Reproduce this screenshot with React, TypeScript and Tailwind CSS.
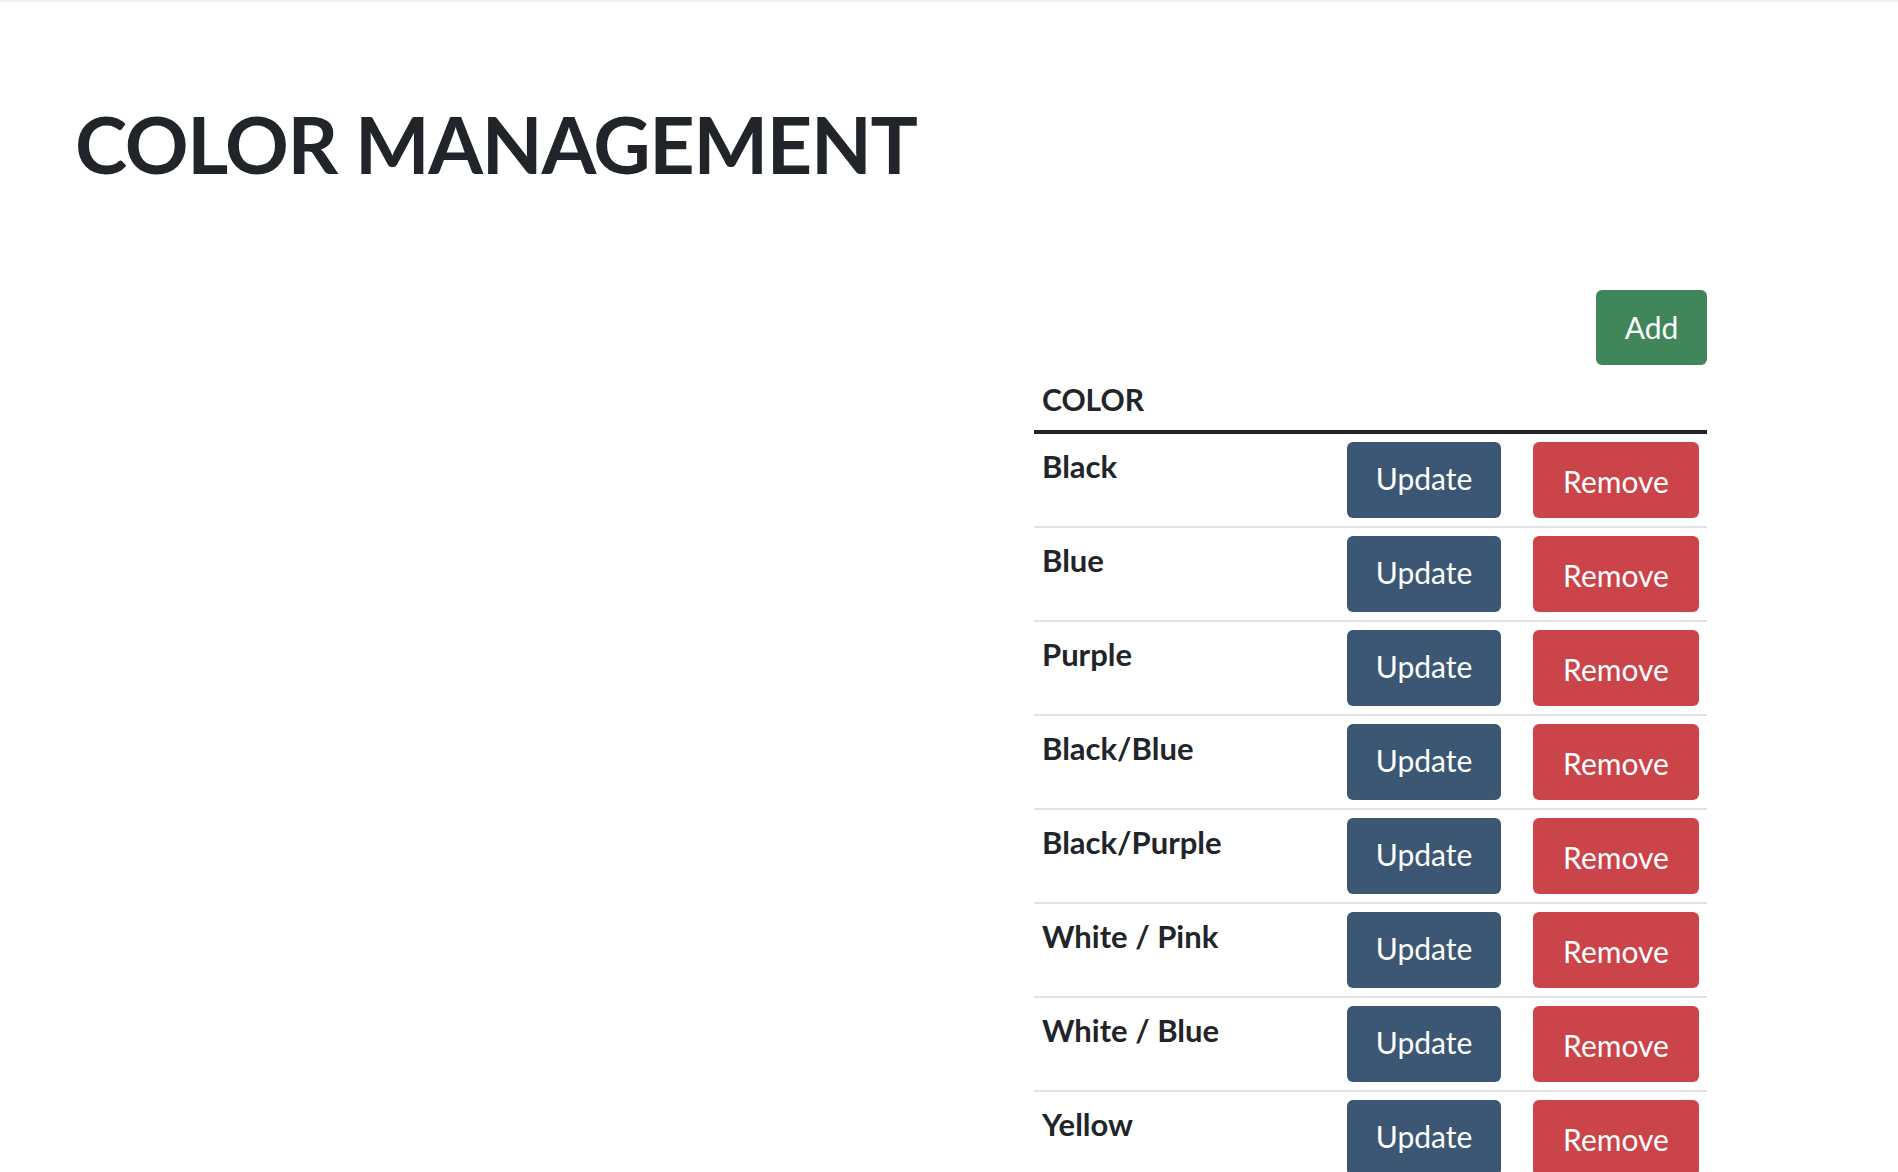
import React from "react";

const colors = [
  "Black",
  "Blue",
  "Purple",
  "Black/Blue",
  "Black/Purple",
  "White / Pink",
  "White / Blue",
  "Yellow",
];

const ColorRow = ({ name }: { name: string }) => {
  return (
    <div className="flex items-start border-b-[2px] border-[#dee2e6] py-[8px] px-[8px]">
      <div className="flex-1 pt-[2px] font-bold text-[31px] leading-[45px] text-[#212529]">{name}</div>
      <button className="w-[154px] h-[76px] rounded-[6px] bg-[#3b5773] text-white text-[30px] flex items-center justify-center pb-[4px]">
        Update
      </button>
      <button className="ml-[32px] w-[166px] h-[76px] rounded-[6px] bg-[#cb444a] text-white text-[30px] flex items-center justify-center pt-[3px]">
        Remove
      </button>
    </div>
  );
};

export default function App() {
  return (
    <div className="min-h-screen bg-white font-['Lato',sans-serif] text-[#212529]">
      <div className="h-[2px] bg-[#f0f0f0]" />
      <div className="ml-[75px] w-[1632px] pt-[94px]">
        <h1 className="text-[79px] leading-[95px] font-bold tracking-[-1.3px]">COLOR MANAGEMENT</h1>
        <div className="ml-auto mt-[99px] w-[673px]">
          <div className="flex justify-end mb-[4px]">
            <button className="w-[111px] h-[75px] rounded-[6px] bg-[#41855a] text-white text-[30px] flex items-center justify-center">
              Add
            </button>
          </div>
          <div className="border-b-[4px] border-[#212529] px-[8px] py-[8px]">
            <span className="font-bold text-[30px] leading-[45px]">COLOR</span>
          </div>
          {colors.map((c) => (
            <ColorRow key={c} name={c} />
          ))}
        </div>
      </div>
    </div>
  );
}
